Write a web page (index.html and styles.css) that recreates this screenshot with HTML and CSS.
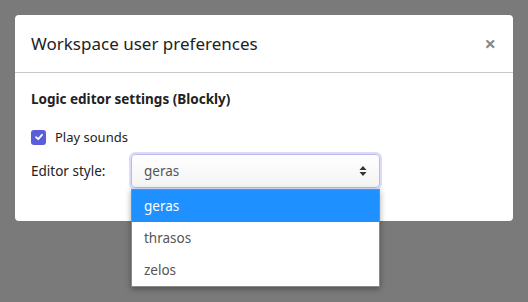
FILE: index.html
```html
<!DOCTYPE html>
<html lang="en">
<head>
    <meta charset="UTF-8">
    <title>Workspace user preferences</title>
    <link rel="stylesheet" href="styles.css">
</head>
<body>

    <div class="modal">
        <div class="modal-header">
            <h2>Workspace user preferences</h2>
            <span class="close">&times;</span>
        </div>
        <div class="modal-body">
            <h3>Logic editor settings (Blockly)</h3>
            <label class="check-row">
                <span class="checkbox">
                    <svg width="10" height="10" viewBox="0 0 10 10"><path d="M2 5.2 L4.2 7.2 L8 2.8" fill="none" stroke="#fff" stroke-width="1.8" stroke-linecap="round" stroke-linejoin="round"/></svg>
                </span>
                Play sounds
            </label>
            <div class="field-row">
                <span class="field-label">Editor style:</span>
                <div class="select-wrap">
                    <div class="select">
                        <span>geras</span>
                        <svg class="arrows" width="8" height="12" viewBox="0 0 8 12"><path d="M4 1 L7.5 5 H0.5 Z M4 11 L7.5 7 H0.5 Z" fill="#333"/></svg>
                    </div>
                    <ul class="options">
                        <li class="selected">geras</li>
                        <li>thrasos</li>
                        <li>zelos</li>
                    </ul>
                </div>
            </div>
        </div>
    </div>

</body>
</html>
```

FILE: styles.css
```css
html {
    height: 100%;
}
body {
    font-family: "Noto Sans", sans-serif;
    margin: 0;
    padding: 15px;
    min-height: 100%;
    box-sizing: border-box;
    background-color: #7a7a7b;
    color: #222;
}
.modal {
    width: 498px;
    background: #fff;
    border-radius: 4px;
}
.modal-header {
    display: flex;
    align-items: center;
    justify-content: space-between;
    height: 57px;
    padding: 0 17px 0 16px;
    border-bottom: 1px solid #c8c8c8;
}
.modal-header h2 {
    margin: 0;
    font-size: 17px;
    font-weight: normal;
    color: #222;
}
.close {
    font-size: 20px;
    font-weight: bold;
    color: #888;
    line-height: 1;
}
.modal-body {
    padding: 17px 16px 33px;
}
.modal-body h3 {
    margin: 0 0 20px;
    font-size: 13.5px;
    line-height: 18px;
    font-weight: bold;
}
.check-row {
    display: flex;
    align-items: center;
    gap: 9px;
    font-size: 13px;
    line-height: 18px;
}
.checkbox {
    width: 15px;
    height: 15px;
    border-radius: 3px;
    background: #5a5ed8;
    display: flex;
    align-items: center;
    justify-content: center;
}
.field-row {
    display: flex;
    align-items: center;
    margin-top: 8px;
}
.field-label {
    width: 100px;
    font-size: 13.5px;
}
.select-wrap {
    position: relative;
}
.select {
    width: 249px;
    height: 34px;
    box-sizing: border-box;
    border: 1px solid #b9b9ee;
    box-shadow: 0 0 0 2px #dcdcf8;
    border-radius: 4px;
    display: flex;
    align-items: center;
    justify-content: space-between;
    padding: 0 12px;
    font-size: 13.5px;
    color: #555;
    background: linear-gradient(#fff, #f4f4f4);
}
.options {
    position: absolute;
    top: 35px;
    left: 0;
    width: 247px;
    margin: 0;
    padding: 0;
    list-style: none;
    background: #fff;
    border: 1px solid #8a8a8a;
    box-shadow: 0 2px 6px rgba(0, 0, 0, 0.35);
    font-size: 13.5px;
    color: #555;
}
.options li {
    height: 32px;
    line-height: 32px;
    padding-left: 12px;
}
.options li.selected {
    background: #1e90ff;
    color: #fff;
}
```
